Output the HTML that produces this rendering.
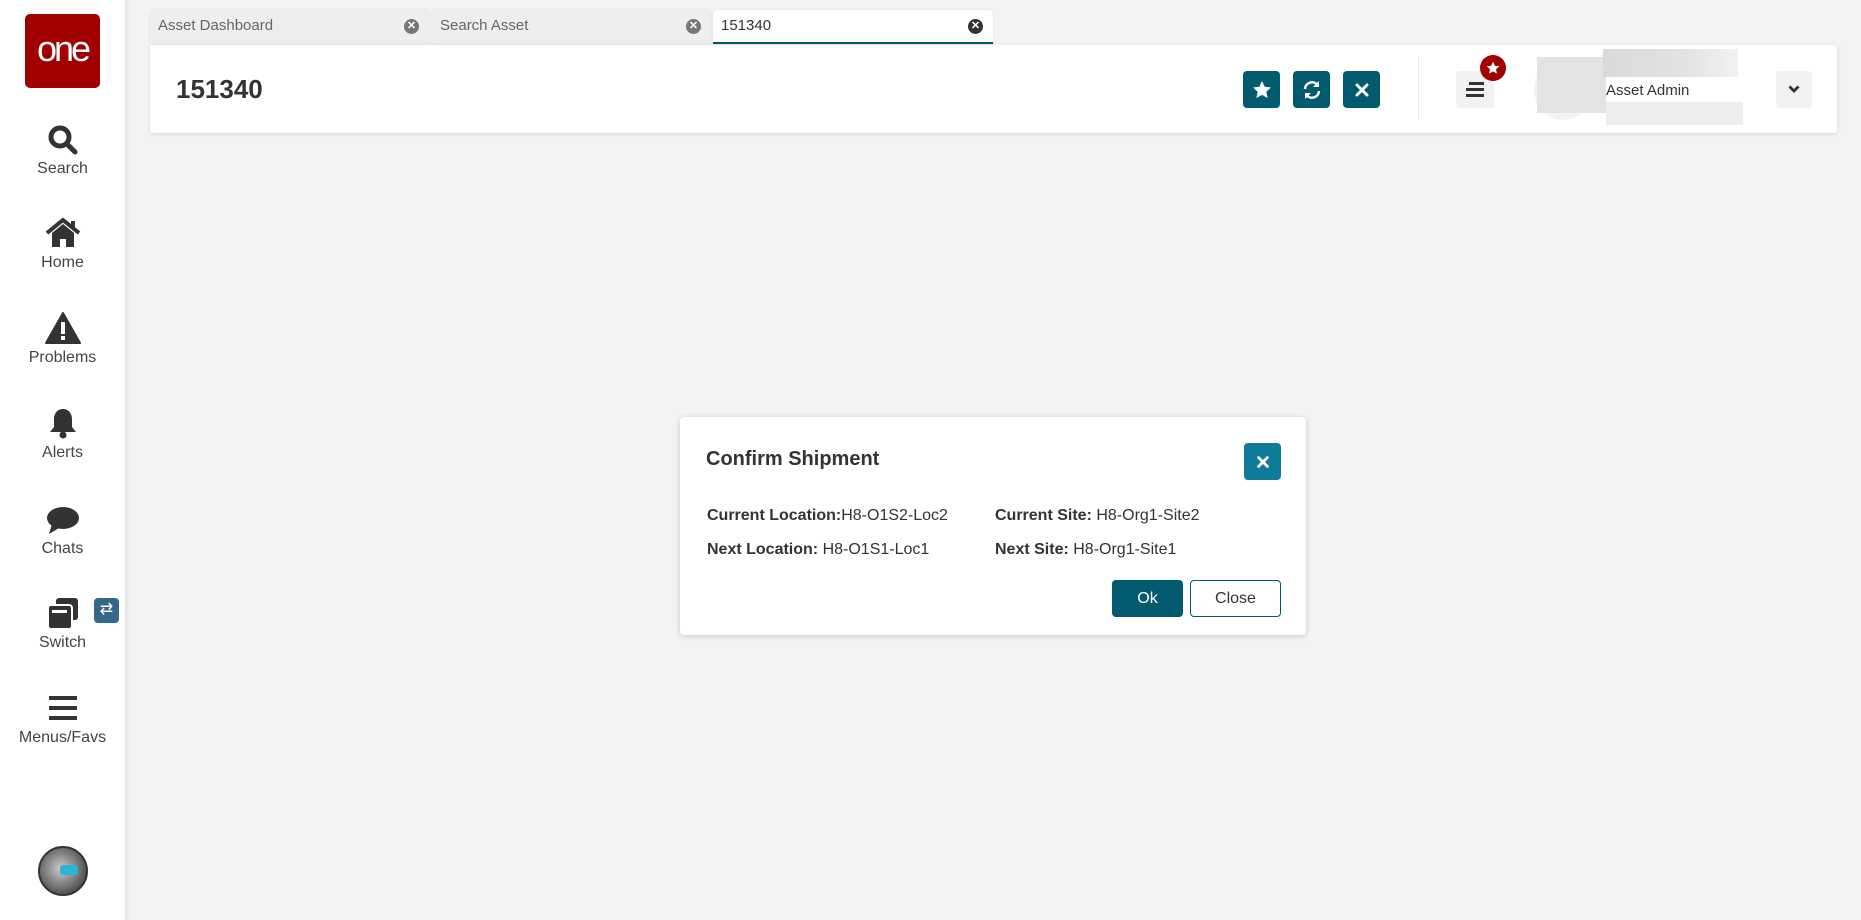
<!DOCTYPE html>
<html><head><meta charset="utf-8"><style>
*{box-sizing:border-box;margin:0;padding:0}
body{width:1861px;height:920px;background:#f3f3f3;font-family:"Liberation Sans",sans-serif;color:#333;position:relative;overflow:hidden}
.abs{position:absolute}
#side{left:0;top:0;width:125px;height:920px;background:#fff;box-shadow:2px 0 4px rgba(0,0,0,.08)}
.lbl{position:absolute;left:0;width:125px;text-align:center;font-size:16px;color:#444}
.ic{position:absolute;left:0;width:125px;display:flex;justify-content:center}
.tab{position:absolute;top:10px;height:34px;background:#eee;border-radius:4px 4px 0 0;font-size:15px;color:#666;padding:7px 8px;box-shadow:0 0 2px rgba(0,0,0,.1)}
.tab .x{position:absolute;right:10px;top:9px;width:15px;height:15px;border-radius:50%;background:#777;color:#fff;font-size:11px;line-height:15px;text-align:center;font-weight:bold}
.tb{position:absolute;top:71px;width:37px;height:37px;border-radius:4px;background:#025a6e;display:flex;align-items:center;justify-content:center}
</style></head><body>
<div id="side" class="abs">
 <div class="abs" style="left:25px;top:14px;width:75px;height:74px;background:#a00000;border-radius:5px;color:#fff;font-size:36px;letter-spacing:-3px;text-align:center;line-height:70px">one</div>
 <div class="ic" style="top:124px"><svg width="32" height="32" viewBox="0 0 32 32"><circle cx="13" cy="13" r="9" fill="none" stroke="#333" stroke-width="5"/><path d="M20 20l8 8" stroke="#333" stroke-width="5" stroke-linecap="round"/></svg></div>
 <div class="lbl" style="top:160px">Search</div>
 <div class="ic" style="top:218px"><svg width="36" height="30" viewBox="0 0 36 30"><path d="M2 15L18 2l16 13" fill="none" stroke="#333" stroke-width="4"/><path d="M26 3h4v8l-4-3z" fill="#333"/><path d="M7 15l11-9 11 9v14h-8v-8h-6v8H7z" fill="#333"/></svg></div>
 <div class="lbl" style="top:254px">Home</div>
 <div class="ic" style="top:312px"><svg width="36" height="32" viewBox="0 0 36 32"><path d="M18 1L35 31H1z" fill="#333" stroke="#333" stroke-width="2" stroke-linejoin="round"/><rect x="16" y="10" width="4" height="12" fill="#fff"/><rect x="16" y="24" width="4" height="4" fill="#fff"/></svg></div>
 <div class="lbl" style="top:349px">Problems</div>
 <div class="ic" style="top:407px"><svg width="30" height="32" viewBox="0 0 30 32"><path d="M15 2c-6 0-9 5-9 10v8l-4 5h26l-4-5v-8c0-5-3-10-9-10z" fill="#333"/><circle cx="15" cy="28" r="3.5" fill="#333"/></svg></div>
 <div class="lbl" style="top:444px">Alerts</div>
 <div class="ic" style="top:506px"><svg width="34" height="30" viewBox="0 0 34 30"><ellipse cx="17" cy="12" rx="16" ry="11" fill="#333"/><path d="M6 18l-3 10 10-6z" fill="#333"/></svg></div>
 <div class="lbl" style="top:540px">Chats</div>
 <div class="ic" style="top:597px"><svg width="32" height="32" viewBox="0 0 32 32"><rect x="9" y="1" width="22" height="22" rx="3" fill="#333"/><rect x="1" y="8" width="24" height="24" rx="3" fill="#333" stroke="#fff" stroke-width="2"/><rect x="5" y="13" width="15" height="3" fill="#fff"/></svg></div>
 <div class="abs" style="left:94px;top:598px;width:25px;height:25px;border-radius:4px;background:#34688a;color:#fff;font-size:16px;text-align:center;line-height:24px">⇄</div>
 <div class="lbl" style="top:634px">Switch</div>
 <div class="ic" style="top:696px"><svg width="28" height="24" viewBox="0 0 28 24"><rect x="0" y="0" width="28" height="4" fill="#333"/><rect x="0" y="10" width="28" height="4" fill="#333"/><rect x="0" y="20" width="28" height="4" fill="#333"/></svg></div>
 <div class="lbl" style="top:729px">Menus/Favs</div>
 <div class="abs" style="left:38px;top:846px;width:50px;height:50px;border-radius:50%;background:radial-gradient(circle at 45% 45%,#ccc,#666 60%,#222);border:2px solid #333"><div class="abs" style="left:20px;top:17px;width:18px;height:10px;background:#2bb3d8;border-radius:3px"></div></div>
</div>

<div class="tab" style="left:150px;width:279px">Asset Dashboard<span class="x">✕</span></div>
<div class="tab" style="left:432px;width:279px">Search Asset<span class="x">✕</span></div>
<div class="tab" style="left:713px;width:280px;background:#fff;color:#333;border-bottom:2px solid #025a6e">151340<span class="x" style="background:#333">✕</span></div>

<div class="abs" style="left:150px;top:45px;width:1687px;height:88px;background:#fff;border-radius:0 3px 3px 3px;box-shadow:0 1px 4px rgba(0,0,0,.12)"></div>
<div class="abs" style="left:176px;top:74px;font-size:26px;font-weight:bold;color:#333">151340</div>
<div class="tb" style="left:1243px"><svg width="20" height="20" viewBox="0 0 20 20"><path d="M10 1l2.7 5.8 6.3.7-4.7 4.3 1.3 6.2L10 14.9 4.4 18l1.3-6.2L1 7.5l6.3-.7z" fill="#fff"/></svg></div>
<div class="tb" style="left:1293px"><svg width="20" height="20" viewBox="0 0 20 20"><path d="M3 9a7 7 0 0 1 12.5-4" fill="none" stroke="#fff" stroke-width="2.5"/><path d="M17 1v6h-6z" fill="#fff"/><path d="M17 11a7 7 0 0 1-12.5 4" fill="none" stroke="#fff" stroke-width="2.5"/><path d="M3 19v-6h6z" fill="#fff"/></svg></div>
<div class="tb" style="left:1343px"><svg width="16" height="16" viewBox="0 0 16 16"><path d="M3 3l10 10M13 3L3 13" stroke="#fff" stroke-width="3" stroke-linecap="round"/></svg></div>
<div class="abs" style="left:1418px;top:57px;width:1px;height:62px;background:#e5e5e5"></div>
<div class="abs" style="left:1456px;top:71px;width:38px;height:37px;border-radius:4px;background:#f2f2f2;display:flex;align-items:center;justify-content:center"><svg width="18" height="16" viewBox="0 0 18 16"><rect x="3" y="0" width="15" height="3" fill="#333"/><rect x="0" y="6" width="18" height="3" fill="#333"/><rect x="0" y="12" width="18" height="3" fill="#333"/></svg></div>
<div class="abs" style="left:1480px;top:55px;width:26px;height:26px;border-radius:50%;background:#a00000;display:flex;align-items:center;justify-content:center"><svg width="14" height="14" viewBox="0 0 20 20"><path d="M10 1l2.7 5.8 6.3.7-4.7 4.3 1.3 6.2L10 14.9 4.4 18l1.3-6.2L1 7.5l6.3-.7z" fill="#fff"/></svg></div>
<div class="abs" style="left:1534px;top:60px;width:58px;height:60px;border-radius:50%;background:#f3f3f3"></div>
<div class="abs" style="left:1537px;top:57px;width:69px;height:56px;background:#e3e3e3"></div>
<div class="abs" style="left:1603px;top:49px;width:135px;height:28px;background:linear-gradient(90deg,#dadada,#e2e2e2 60%,#f2f2f2)"></div>
<div class="abs" style="left:1606px;top:82px;font-size:15px;color:#333">Asset Admin</div>
<div class="abs" style="left:1606px;top:102px;width:137px;height:23px;background:#ededed"></div>
<div class="abs" style="left:1776px;top:71px;width:36px;height:37px;border-radius:4px;background:#f2f2f2;display:flex;align-items:center;justify-content:center"><svg width="12" height="9" viewBox="0 0 12 9"><path d="M1.5 1.5L6 6l4.5-4.5" fill="none" stroke="#333" stroke-width="2.8"/></svg></div>

<div class="abs" style="left:680px;top:417px;width:626px;height:218px;background:#fff;border-radius:4px;box-shadow:0 1px 6px rgba(0,0,0,.18)"></div>
<div class="abs" style="left:706px;top:448px;font-size:20px;font-weight:bold;color:#333">Confirm Shipment</div>
<div class="abs" style="left:1244px;top:443px;width:37px;height:37px;border-radius:4px;background:#0e7c99;display:flex;align-items:center;justify-content:center"><svg width="14" height="14" viewBox="0 0 16 16"><path d="M3 3l10 10M13 3L3 13" stroke="#fff" stroke-width="3.2" stroke-linecap="round"/></svg></div>
<div class="abs" style="left:707px;top:507px;font-size:16px"><b>Current Location:</b>H8-O1S2-Loc2</div>
<div class="abs" style="left:995px;top:507px;font-size:16px"><b>Current Site:</b> H8-Org1-Site2</div>
<div class="abs" style="left:707px;top:541px;font-size:16px"><b>Next Location:</b> H8-O1S1-Loc1</div>
<div class="abs" style="left:995px;top:541px;font-size:16px"><b>Next Site:</b> H8-Org1-Site1</div>
<div class="abs" style="left:1112px;top:580px;width:71px;height:37px;border-radius:4px;background:#025a6e;color:#fff;font-size:16px;text-align:center;line-height:37px">Ok</div>
<div class="abs" style="left:1190px;top:580px;width:91px;height:37px;border-radius:4px;border:1px solid #025a6e;color:#333;font-size:16px;text-align:center;line-height:35px">Close</div>
</body></html>
